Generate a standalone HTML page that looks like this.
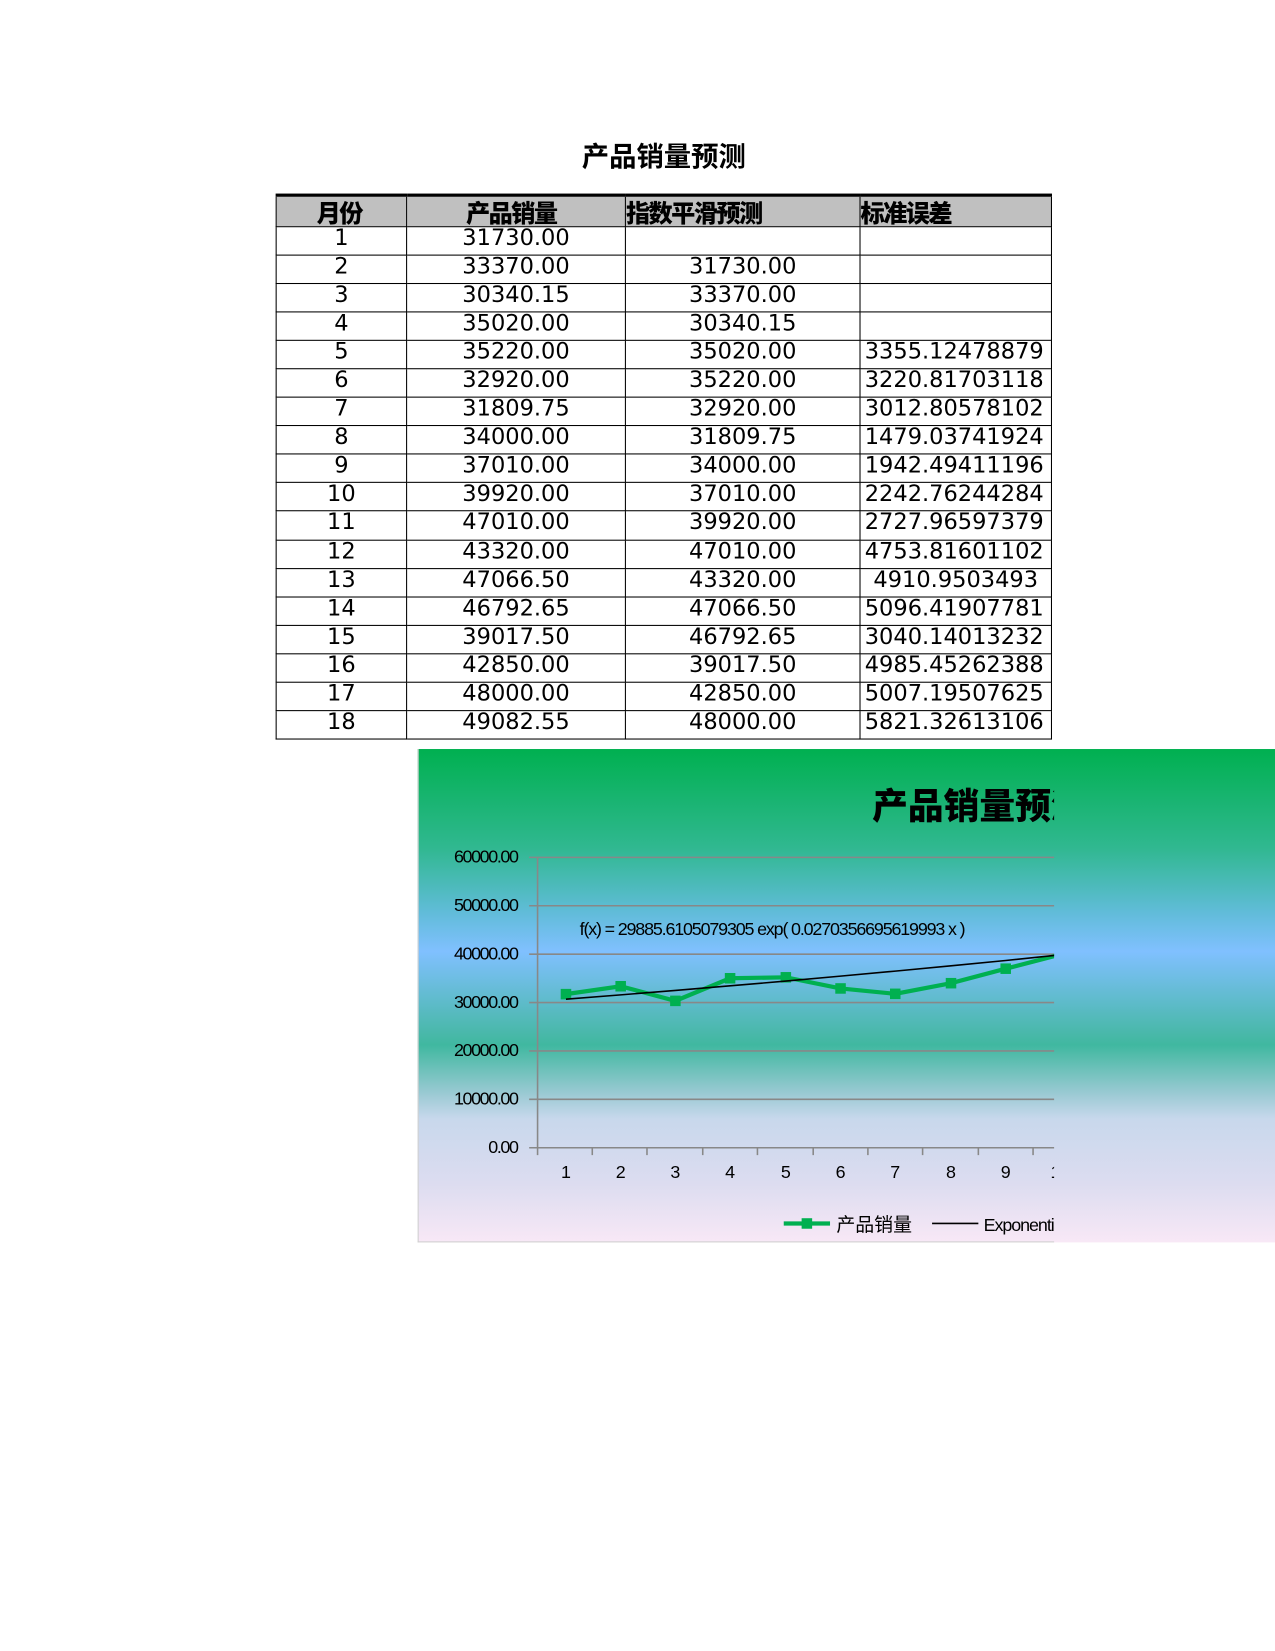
<!DOCTYPE html>
<html><head><meta charset="utf-8"><style>
html,body{margin:0;padding:0;background:#fff;width:1275px;height:1650px;overflow:hidden}
#w{position:absolute;left:0;top:0;width:1212px;height:1569px;transform:scale(1.052);transform-origin:0 0}
.t{position:absolute;left:0;width:1262px;text-align:center;top:129px;font:bold 26px "Noto Sans CJK SC",sans-serif}
table{position:absolute;left:262px;top:184px;border-collapse:collapse;font:21.4px "DejaVu Sans","Noto Sans CJK SC",sans-serif}
td{border:1.5px solid #000;height:26.05px;padding:0;line-height:22px;vertical-align:top;text-align:center;white-space:nowrap;overflow:hidden}
tr.h td{background:#c0c0c0;border-top:3px solid #000;font-weight:900;font-size:23px;font-family:"Noto Sans CJK SC",sans-serif;height:22.5px;line-height:28px;letter-spacing:-1.5px}
td.l{text-align:left}
td.r{text-align:left;padding-left:4px}
#c{position:absolute;left:397px;top:712px;width:815px;height:469px;background:linear-gradient(#00b050 0%,#30b890 20%,#60bcd8 33%,#80c0ff 41%,#48b8a8 58%,#40b8a0 60%,#9ccad4 70%,#c8d8ec 75%,#dcdcf0 88%,#f8e8f6 100%)}
#cl{position:absolute;left:397px;top:712px;width:605px;height:469px;border-left:1px solid #d0d0d0;border-bottom:1px solid #d0d0d0;box-sizing:border-box;overflow:hidden}
</style></head><body><div id="w">
<div class="t">产品销量预测</div>
<table>
<colgroup><col style="width:124px"><col style="width:208px"><col style="width:223px"><col style="width:182px"></colgroup>
<tr class="h"><td style="text-align:left;padding-left:38px">月份</td><td style="text-align:left;padding-left:56px">产品销量</td><td class="l">指数平滑预测</td><td class="l">标准误差</td></tr>
<tr><td>1</td><td>31730.00</td><td></td><td></td></tr>
<tr><td>2</td><td>33370.00</td><td>31730.00</td><td></td></tr>
<tr><td>3</td><td>30340.15</td><td>33370.00</td><td></td></tr>
<tr><td>4</td><td>35020.00</td><td>30340.15</td><td></td></tr>
<tr><td>5</td><td>35220.00</td><td>35020.00</td><td class="r">3355.12478879</td></tr>
<tr><td>6</td><td>32920.00</td><td>35220.00</td><td class="r">3220.81703118</td></tr>
<tr><td>7</td><td>31809.75</td><td>32920.00</td><td class="r">3012.80578102</td></tr>
<tr><td>8</td><td>34000.00</td><td>31809.75</td><td class="r">1479.03741924</td></tr>
<tr><td>9</td><td>37010.00</td><td>34000.00</td><td class="r">1942.49411196</td></tr>
<tr><td>10</td><td>39920.00</td><td>37010.00</td><td class="r">2242.76244284</td></tr>
<tr><td>11</td><td>47010.00</td><td>39920.00</td><td class="r">2727.96597379</td></tr>
<tr><td>12</td><td>43320.00</td><td>47010.00</td><td class="r">4753.81601102</td></tr>
<tr><td>13</td><td>47066.50</td><td>43320.00</td><td>4910.9503493</td></tr>
<tr><td>14</td><td>46792.65</td><td>47066.50</td><td class="r">5096.41907781</td></tr>
<tr><td>15</td><td>39017.50</td><td>46792.65</td><td class="r">3040.14013232</td></tr>
<tr><td>16</td><td>42850.00</td><td>39017.50</td><td class="r">4985.45262388</td></tr>
<tr><td>17</td><td>48000.00</td><td>42850.00</td><td class="r">5007.19507625</td></tr>
<tr><td>18</td><td>49082.55</td><td>48000.00</td><td class="r">5821.32613106</td></tr>
</table>
<div id="c"></div>
<div id="cl">
<svg width="605" height="469" viewBox="397 712 605 469" style="position:absolute;left:0;top:0;font-family:'Liberation Sans','Noto Sans CJK SC',sans-serif">
<text x="828" y="778" font-size="34" font-weight="900" font-family="Noto Sans CJK SC,sans-serif">产品销量预测</text>
<g stroke="#888" stroke-width="1.5">
<line x1="502" y1="815" x2="1002" y2="815"/><line x1="502" y1="861" x2="1002" y2="861"/><line x1="502" y1="907" x2="1002" y2="907"/><line x1="502" y1="953" x2="1002" y2="953"/><line x1="502" y1="999" x2="1002" y2="999"/><line x1="502" y1="1045" x2="1002" y2="1045"/><line x1="502" y1="1091" x2="1002" y2="1091"/>
<line x1="510" y1="815" x2="510" y2="1098"/>
<path d="M562 1091v7M614 1091v7M667 1091v7M719 1091v7M772 1091v7M824 1091v7M876 1091v7M929 1091v7M981 1091v7"/>
</g>
<g font-size="17" text-anchor="end" letter-spacing="-1.3">
<text x="491" y="820">60000.00</text><text x="491" y="866">50000.00</text><text x="491" y="912">40000.00</text><text x="491" y="958">30000.00</text><text x="491" y="1004">20000.00</text><text x="491" y="1050">10000.00</text><text x="491" y="1096">0.00</text>
</g>
<g font-size="17" text-anchor="middle">
<text x="537" y="1120">1</text><text x="589" y="1120">2</text><text x="641" y="1120">3</text><text x="693" y="1120">4</text><text x="746" y="1120">5</text><text x="798" y="1120">6</text><text x="850" y="1120">7</text><text x="903" y="1120">8</text><text x="955" y="1120">9</text><text x="1007" y="1120">10</text>
</g>
<text x="550" y="889" font-size="17" letter-spacing="-1.1">f(x) = 29885.6105079305 exp( 0.0270356695619993 x )</text>
<polyline fill="none" stroke="#00b050" stroke-width="4" points="537,945 589,937.5 641,951.4 693,929.9 746,929 798,939.6 850,944.7 903,934.6 955,920.8 1007,907.4"/>
<g fill="#00b050"><rect x="532" y="940" width="10" height="10"/><rect x="584" y="932.5" width="10" height="10"/><rect x="636" y="946.4" width="10" height="10"/><rect x="688" y="924.9" width="10" height="10"/><rect x="741" y="924" width="10" height="10"/><rect x="793" y="934.6" width="10" height="10"/><rect x="845" y="939.7" width="10" height="10"/><rect x="898" y="929.6" width="10" height="10"/><rect x="950" y="915.8" width="10" height="10"/></g>
<polyline fill="none" stroke="#000" stroke-width="1.5" points="537,949.8 589,945.7 641,941.5 693,937.1 746,932.6 798,927.9 850,923.1 903,918.1 955,913 1007,907.6"/>
<line x1="744" y1="1163" x2="788" y2="1163" stroke="#00b050" stroke-width="4"/><rect x="761" y="1158" width="10" height="10" fill="#00b050"/>
<text x="794" y="1170" font-size="18" font-family="Noto Sans CJK SC,sans-serif">产品销量</text>
<line x1="885" y1="1163" x2="929" y2="1163" stroke="#000" stroke-width="1.5"/>
<text x="934" y="1170" font-size="17" letter-spacing="-1">Exponential</text>
</svg>
</div>
</div></body></html>
